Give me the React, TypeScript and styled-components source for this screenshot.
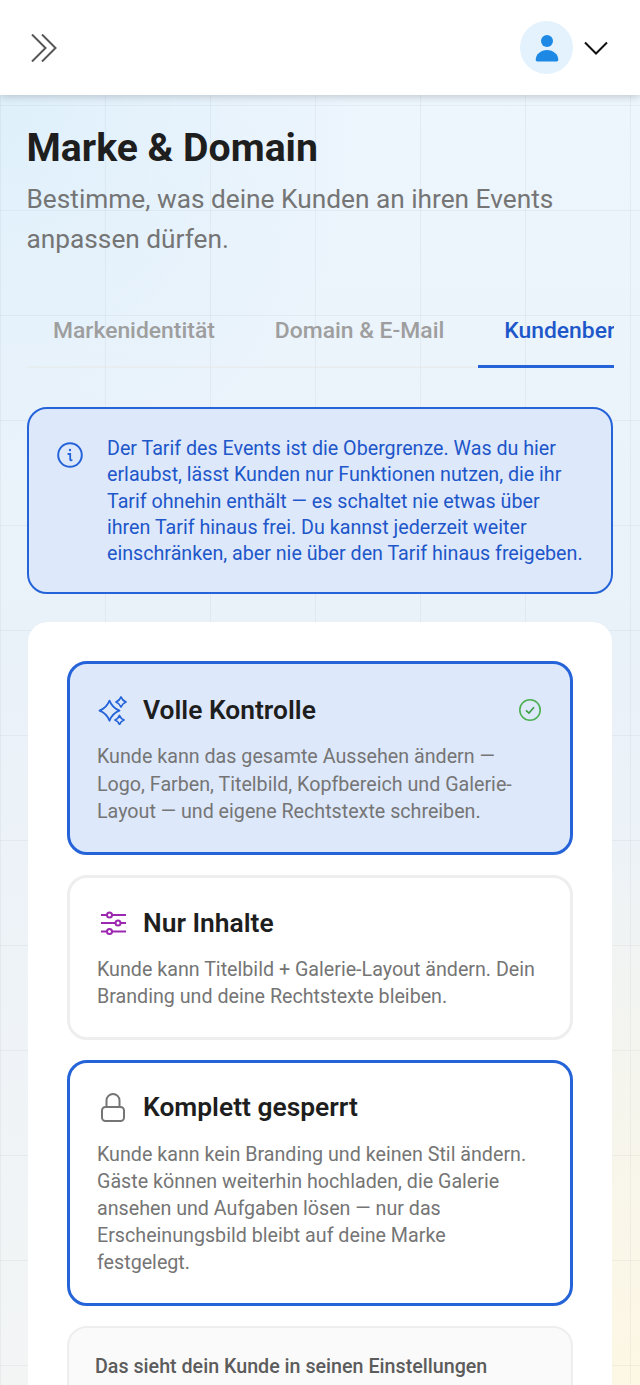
import React from "react";
import styled, { createGlobalStyle } from "styled-components";

const Global = createGlobalStyle`
  html, body { margin: 0; padding: 0; height: 1385px; overflow: hidden; }
  body { font-family: Roboto, "Liberation Sans", sans-serif; }
  * { box-sizing: border-box; }
`;
const Page = styled.div`
  height: 1385px; overflow: hidden; display: flex; flex-direction: column;
  background-color: #eef3f7;
  background-image:
    linear-gradient(rgba(110,120,135,.08) 1px, transparent 1px),
    linear-gradient(90deg, rgba(110,120,135,.08) 1px, transparent 1px),
    radial-gradient(ellipse 560px 560px at 100% 100%, #fdf7e4 0%, rgba(253,247,228,0) 100%),
    radial-gradient(ellipse 360px 380px at 0% 8%, #dff0fb 0%, rgba(223,240,251,0) 100%),
    linear-gradient(180deg, #eef6fe 0%, #e9f1f9 45%, #f3f5f5 100%);
  background-size: 105px 105px, 105px 105px, auto, auto, auto;
`;
const Header = styled.header`
  height: 95px; flex: none; background: #fff; display: flex; align-items: center;
  justify-content: space-between; padding: 0 32px 0 31px;
  box-shadow: 0 2px 8px rgba(0,0,0,.18); position: relative;
`;
const UserMenu = styled.div`display: flex; align-items: center; gap: 11px;`;
const Avatar = styled.div`
  width: 53px; height: 53px; border-radius: 50%; background: #e3f2fd;
  display: flex; align-items: center; justify-content: center;
`;
const Main = styled.main`padding: 31px 27px 0;`;
const Title = styled.h1`
  margin: 0 0 0 -.5px; font-size: 39.2px; line-height: 45px; font-weight: 700; color: #1e1e1e;
`;
const Subtitle = styled.p`
  margin: 8px 0 0 -.5px; font-size: 26.25px; line-height: 40px; color: #757575; font-weight: 400;
`;
const Tabs = styled.nav`
  margin: 41px -1px 0 0; display: flex; gap: 8px; overflow: hidden; height: 68px;
  box-shadow: inset 0 -1.500px 0 rgba(232,232,232,.6);
`;
const Tab = styled.div<{ $active?: boolean }>`
  flex: none; padding: 8px 26px 0; height: 68px; line-height: 46px; font-size: 22.88px; font-weight: 500;
  white-space: nowrap; color: ${p => (p.$active ? "#1d57c9" : "#9e9e9e")};
  border-bottom: 3px solid ${p => (p.$active ? "#2563d9" : "transparent")};
`;
const Info = styled.div`
  margin-top: 39px; border: 2px solid #2563d9; border-radius: 20px; background: #dde8fb;
  padding: 27px 26px 25px 28px; display: flex; gap: 24px;
`;
const InfoText = styled.p`
  margin: 0; font-size: 19.68px; line-height: 26.3px; color: #1d57c9;
`;
const Card = styled.section`
  margin: 27.500px 1px 0; background: #fff; border-radius: 20px; padding: 39px 39px 0;
  display: flex; flex-direction: column; gap: 20px;
`;
const Option = styled.div<{ $border: string; $bg?: string; $selected?: boolean }>`
  border: 3px solid ${p => p.$border}; border-radius: 20px; background: ${p => p.$bg || "#fff"};
  padding: ${p => (p.$selected ? "29px 27px 27px" : "27.500px 27px 26px")};
`;
const OptionHead = styled.div`
  display: flex; align-items: center; gap: 16px; height: 34px; margin-bottom: 16.500px;
`;
const OptionTitle = styled.h3`
  margin: 0; font-size: 26.4px; line-height: 34px; font-weight: 600; color: #1e1e1e; flex: 1;
`;
const OptionDesc = styled.p`
  margin: 0; font-size: 19.68px; line-height: 27.2px; color: #757575;
`;
const Preview = styled.div`
  border: 2px solid #eeeeee; border-radius: 20px; background: #fafafa; padding: 26px;
`;
const PreviewTitle = styled.div`
  font-size: 19.68px; line-height: 26px; font-weight: 500; color: #5c5c5c;
`;

const Chevrons = () => (
  <svg width="28" height="28" viewBox="0 0 28 28" fill="none" stroke="#555" strokeWidth="2">
    <path d="M1 .5 14.5 14 1 27.5M11 .5 24.5 14 11 27.5" />
  </svg>
);
const Person = () => (
  <svg width="24" height="28" viewBox="0 0 24 28" fill="#1e88e5">
    <circle cx="12" cy="7" r="6" />
    <path d="M.7 26c0-5.600 5-10 11.300-10s11.300 4.400 11.300 10c0 .9-.7 1.400-1.600 1.400H2.300C1.400 27.400.7 26.900.7 26z" />
  </svg>
);
const Chevron = () => (
  <svg width="24" height="14" viewBox="0 0 24 14" fill="none" stroke="#111" strokeWidth="2">
    <path d="M1 1.500 12 12.500 23 1.500" />
  </svg>
);
const InfoIcon = () => (
  <svg width="26" height="26" viewBox="0 0 26 26" fill="none" stroke="#2563d9" strokeWidth="2" style={{ flex: "none", marginTop: 6 }}>
    <circle cx="13" cy="13" r="11.800" />
    <circle cx="13" cy="8" r="1.200" fill="#2563d9" stroke="none" />
    <path d="M11.300 12h1.900v5.500q0 1 1.500.7" strokeWidth="1.800" strokeLinecap="round" />
  </svg>
);
const star = (cx: number, cy: number, r: number) => {
  const k = r * 0.28;
  return `M${cx} ${cy - r}Q${cx + k} ${cy - k} ${cx + r} ${cy}Q${cx + k} ${cy + k} ${cx} ${cy + r}Q${cx - k} ${cy + k} ${cx - r} ${cy}Q${cx - k} ${cy - k} ${cx} ${cy - r}Z`;
};
const Sparkles = () => (
  <svg width="30" height="30" viewBox="0 0 30 30" fill="none" stroke="#2563d9" strokeWidth="1.800" strokeLinejoin="round">
    <path d={star(12.500, 15.700, 10)} />
    <path d={star(24, 7, 5)} />
    <path d={star(22.500, 25, 4.500)} />
  </svg>
);
const Sliders = () => (
  <svg width="30" height="30" viewBox="0 0 30 30" fill="none" stroke="#9c27b0" strokeWidth="2">
    <path d="M4 7h25M4 15h25M4 23.500h25" />
    <circle cx="12.500" cy="7" r="2.500" fill="#fff" />
    <circle cx="21" cy="15" r="2.500" fill="#fff" />
    <circle cx="12.500" cy="23.500" r="2.500" fill="#fff" />
  </svg>
);
const Lock = () => (
  <svg width="30" height="30" viewBox="0 0 30 30" fill="none" stroke="#757575" strokeWidth="2">
    <rect x="5" y="15" width="22" height="14" rx="3.500" />
    <path d="M9.500 15V8.500a6.500 6.500 0 0 1 13 0V15" />
  </svg>
);
const Check = () => (
  <svg width="24" height="24" viewBox="0 0 24 24" fill="none" stroke="#4caf50" strokeWidth="1.600" style={{ marginRight: 1 }}>
    <circle cx="12" cy="12" r="10.200" />
    <path d="M8 12.300 11 15 16 9.200" stroke="#3f9c46" />
  </svg>
);

export default function App() {
  return (
    <Page>
      <Global />
      <Header>
        <Chevrons />
        <UserMenu>
          <Avatar><Person /></Avatar>
          <Chevron />
        </UserMenu>
      </Header>
      <Main>
        <Title>Marke &amp; Domain</Title>
        <Subtitle>Bestimme, was deine Kunden an ihren Events anpassen dürfen.</Subtitle>
        <Tabs>
          <Tab>Markenidentität</Tab>
          <Tab>Domain &amp; E-Mail</Tab>
          <Tab $active>Kundenberechtigungen</Tab>
        </Tabs>
        <Info>
          <InfoIcon />
          <InfoText>Der Tarif des Events ist die Obergrenze. Was du hier erlaubst, lässt Kunden nur Funktionen nutzen, die ihr Tarif ohnehin enthält — es schaltet nie etwas über ihren Tarif hinaus frei. Du kannst jederzeit weiter einschränken, aber nie über den Tarif hinaus freigeben.</InfoText>
        </Info>
        <Card>
          <Option $border="#2563d9" $bg="#dde8fb" $selected>
            <OptionHead>
              <Sparkles />
              <OptionTitle>Volle Kontrolle</OptionTitle>
              <Check />
            </OptionHead>
            <OptionDesc>Kunde kann das gesamte Aussehen ändern — Logo, Farben, Titelbild, Kopfbereich und Galerie-Layout — und eigene Rechtstexte schreiben.</OptionDesc>
          </Option>
          <Option $border="#eeeeee">
            <OptionHead>
              <Sliders />
              <OptionTitle>Nur Inhalte</OptionTitle>
            </OptionHead>
            <OptionDesc>Kunde kann Titelbild + Galerie-Layout ändern. Dein Branding und deine Rechtstexte bleiben.</OptionDesc>
          </Option>
          <Option $border="#2563d9">
            <OptionHead>
              <Lock />
              <OptionTitle>Komplett gesperrt</OptionTitle>
            </OptionHead>
            <OptionDesc>Kunde kann kein Branding und keinen Stil ändern. Gäste können weiterhin hochladen, die Galerie ansehen und Aufgaben lösen — nur das Erscheinungsbild bleibt auf deine Marke festgelegt.</OptionDesc>
          </Option>
          <Preview>
            <PreviewTitle>Das sieht dein Kunde in seinen Einstellungen</PreviewTitle>
          </Preview>
        </Card>
      </Main>
    </Page>
  );
}
